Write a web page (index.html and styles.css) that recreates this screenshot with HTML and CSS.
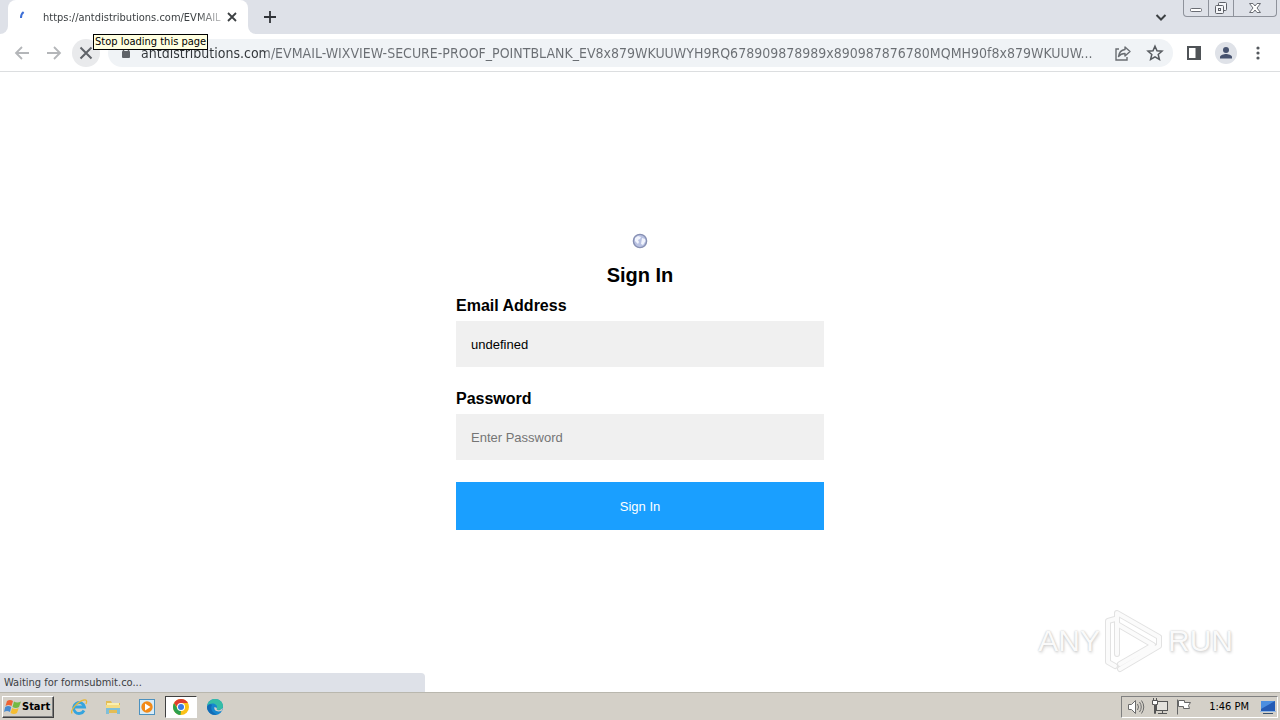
FILE: index.html
```html
<!DOCTYPE html>
<html lang="en">
<head>
<meta charset="utf-8">
<meta name="viewport" content="width=device-width, initial-scale=1">
<title>Sign In</title>
<link rel="stylesheet" href="styles.css">
</head>
<body>
<header class="tabstrip">
  <div class="tab-edge"></div>
  <div class="tab">
    <svg class="spinner" width="16" height="16" viewBox="0 0 16 16" fill="none" stroke="#3d6fd6" stroke-width="2"><path d="M2 9Q1.800 5.200 4.600 3"/></svg>
    <span class="tab-title">https://antdistributions.com/EVMAIL</span>
    <button class="bare" aria-label="Close tab"><svg width="16" height="16" viewBox="0 0 16 16" stroke="#3c4043" stroke-width="1.800"><path d="M4 4l8 8M12 4l-8 8"/></svg></button>
  </div>
  <div class="strip-rest">
    <button class="bare new-tab" aria-label="New tab"><svg width="16" height="16" viewBox="0 0 16 16" stroke="#303338" stroke-width="1.800"><path d="M8 2v12M2 8h12"/></svg></button>
    <button class="bare tab-search" aria-label="Search tabs"><svg width="16" height="16" viewBox="0 0 16 16" fill="none" stroke="#3c4043" stroke-width="2"><path d="M3.500 6L8 10.500 12.500 6"/></svg></button>
    <div class="window-buttons">
      <button class="win" aria-label="Minimize"><svg width="16" height="16" viewBox="0 0 16 16" fill="#fff" stroke="#6a6d74"><rect x="2.500" y="8.500" width="11" height="3" rx="1"/></svg></button>
      <button class="win" aria-label="Restore"><svg width="16" height="16" viewBox="0 0 16 16" fill="#f4f5f8" stroke="#5d6067"><rect x="5.500" y="2.500" width="8" height="8" rx="1"/><rect x="2.500" y="5.500" width="8" height="8" rx="1"/><rect x="5.500" y="8.500" width="2" height="2"/></svg></button>
      <button class="win win-close" aria-label="Close"><svg width="16" height="16" viewBox="0 0 16 16" fill="#fff" stroke="#6a6d74"><path d="M2.500 3.500h3.500l2 2.500 2-2.500h3.500l-3.500 4.500 3.500 4.500H10L8 10l-2 2.500H2.500L6 8z"/></svg></button>
    </div>
  </div>
</header>

<nav class="toolbar">
  <button class="bare round" aria-label="Back"><svg width="18" height="18" viewBox="0 0 18 18" fill="none" stroke="#b4b6b9" stroke-width="1.800"><path d="M16 9H3M9 3L3 9l6 6"/></svg></button>
  <button class="bare round" aria-label="Forward"><svg width="18" height="18" viewBox="0 0 18 18" fill="none" stroke="#b4b6b9" stroke-width="1.800"><path d="M2 9h13M9 3l6 6-6 6"/></svg></button>
  <div class="stop-wrap">
    <button class="bare round stop" aria-label="Stop" aria-describedby="tip"><svg width="18" height="18" viewBox="0 0 18 18" stroke="#5f6368" stroke-width="2"><path d="M3.500 3.500l11 11M14.500 3.500l-11 11"/></svg></button>
    <div class="tooltip" id="tip" role="tooltip">Stop loading this page</div>
  </div>
  <div class="omnibox">
    <svg class="lock" width="12" height="16" viewBox="0 0 12 16"><path d="M3.500 7V5a2.500 2.500 0 0 1 5 0v2" fill="none" stroke="#5f6368" stroke-width="1.500"/><rect x="2" y="6" width="8" height="7" rx="1" fill="#5f6368"/></svg>
    <input class="url" type="text" aria-label="Address" spellcheck="false" value="antdistributions.com/EVMAIL-WIXVIEW-SECURE-PROOF_POINTBLANK_EV8x879WKUUWYH9RQ678909878989x890987876780MQMH90f8x879WKUUW...">
    <button class="bare" aria-label="Share"><svg width="18" height="18" viewBox="0 0 18 18" fill="none" stroke="#696d72" stroke-width="1.400"><path d="M5 5H2v11h11v-3"/><path d="M11 3l5 4.500-5 4.500V9.500C8 9.500 6 10.500 4.500 12.500 5 8.500 7.500 6 11 5.500z" stroke-linejoin="round"/></svg></button>
    <button class="bare" aria-label="Bookmark"><svg width="18" height="18" viewBox="0 0 18 18" fill="none" stroke="#55595e" stroke-width="1.500"><path d="M9 2.200l2 4.600 5 .4-3.800 3.300 1.200 4.900L9 12.800l-4.400 2.600 1.200-4.900L2 7.200l5-.4z"/></svg></button>
  </div>
  <button class="bare" aria-label="Side panel"><svg width="16" height="16" viewBox="0 0 16 16"><rect x="2" y="2" width="12" height="12" fill="#fff" stroke="#4f5357" stroke-width="2"/><path d="M9.500 2H14v12H9.500z" fill="#4f5357"/></svg></button>
  <button class="bare avatar" aria-label="Profile"><svg width="22" height="22" viewBox="0 0 22 22"><circle cx="11" cy="11" r="11" fill="#dfe2e8"/><circle cx="11" cy="8" r="3" fill="#47536f"/><path d="M5 16.500v-1.500c0-2 4-3 6-3s6 1 6 3v1.500z" fill="#47536f"/></svg></button>
  <button class="bare" aria-label="Menu"><svg width="16" height="16" viewBox="0 0 16 16" fill="#55595e"><circle cx="8" cy="3" r="1.600"/><circle cx="8" cy="8" r="1.600"/><circle cx="8" cy="13" r="1.600"/></svg></button>
</nav>

<main class="page">
  <form class="signin">
    <svg class="globe" width="16" height="16" viewBox="0 0 16 16"><circle cx="8" cy="8" r="6.600" fill="#b9c2e2" stroke="#8790b3" stroke-width="1.400"/><path d="M3 5l3-2 3 1-1 2-2 1 1 2-1 2-3-3zM10 5l3 1 .5 2-2.500 4-2-1 .5-3z" fill="#f1f4fd"/></svg>
    <h1>Sign In</h1>
    <label for="email">Email Address</label>
    <input id="email" class="field" type="text" value="undefined">
    <label for="password">Password</label>
    <input id="password" class="field" type="password" placeholder="Enter Password">
    <button class="submit" type="button">Sign In</button>
  </form>
  <div class="status">Waiting for formsubmit.co...</div>
  <div class="watermark">
    <span>ANY</span>
    <svg width="60" height="66" viewBox="0 0 60 66" fill="none" stroke-linejoin="round" stroke-linecap="round"><g stroke="#e2e2e2" stroke-width="6"><path d="M11 11L4 13v41l7 4M13 46V5l42 24"/><path d="M13 16l36 21-33 19M16 61l39-23V30"/></g><g stroke="#fbfbfb" stroke-width="4"><path d="M11 11L4 13v41l7 4M13 46V5l42 24"/><path d="M13 16l36 21-33 19M16 61l39-23V30"/></g></svg>
    <span>RUN</span>
  </div>
</main>

<footer class="taskbar">
  <button class="start"><svg width="18" height="16" viewBox="0 0 18 16"><path d="M3 2q3-2 6 0L7.500 7q-3-2-6 0z" fill="#ee6334"/><path d="M10 2.500q3 2 7 0L15 8q-3 2-6.500 0z" fill="#74b943"/><path d="M1.200 8q3-2 6 0L6 13q-3-2-6 0z" fill="#488bd0"/><path d="M8.200 9q3 2 6.500 0L13 14q-3 2-6.500 0z" fill="#f5bd32"/></svg>Start</button>
  <div class="launchers">
    <button class="bare task" aria-label="Internet Explorer"><svg width="18" height="18" viewBox="0 0 18 18" fill="none"><path d="M14 12.500A5.500 5.500 0 1 1 14.500 9H5" stroke="#35a4de" stroke-width="2.800"/><path d="M2 15.500C0 12 8 3 14 2c3-.5 3 1.500 2 4" stroke="#e7b839" stroke-width="1.300"/></svg></button>
    <button class="bare task" aria-label="File Explorer"><svg width="18" height="18" viewBox="0 0 18 18"><path d="M2 3h5l1 2h8v10H2z" fill="#e3bd55"/><path d="M3 5h12v6H3z" fill="#fbefad"/><path d="M2 8h14v8h-3v-4H5v4H2z" fill="#7fbfd9"/><path d="M2 7h14v3H2z" fill="#f5dc83"/></svg></button>
    <button class="bare task" aria-label="Media Player"><svg width="18" height="18" viewBox="0 0 18 18"><rect x="1.500" y="1.500" width="15" height="15" fill="#d8ecf8" stroke="#4c91bf"/><circle cx="9" cy="9" r="5.700" fill="#f28a18"/><path d="M7 5.500l5.500 3.500L7 12.500z" fill="#fff"/></svg></button>
    <button class="bare task active" aria-label="Chrome"><svg width="18" height="18" viewBox="0 0 18 18"><circle cx="9" cy="9" r="8" fill="#fbc116"/><path d="M2.070 5L6 11.500l3 1L8.500 17A8 8 0 0 1 2.070 5z" fill="#2da04e"/><path d="M9 5h6.930A8 8 0 0 0 2.070 5L6 10z" fill="#df3d30"/><circle cx="9" cy="9" r="4" fill="#fff"/><circle cx="9" cy="9" r="3" fill="#397be6"/></svg></button>
    <button class="bare task" aria-label="Edge"><svg width="18" height="18" viewBox="0 0 18 18"><circle cx="9" cy="9" r="8" fill="#1686cf"/><path d="M1.200 8C2 3 5.500 1 9 1c5 0 8 3.500 8 7 0 2.500-2 4-5 4-2 0-2-1-1-2 .5-3-2-4.500-4.500-4.500S2 6.500 1.200 8z" fill="#35bda6"/><path d="M6 7c-2 3 0 8 5 9.500-5 1.500-10-2.500-10-7.500C2 6 5 5.500 6 7z" fill="#136bb5"/><path d="M8.500 9c-1 3 2 5.500 7 4l1.500-3-3 2c-3 1-4-1-3-2z" fill="#d4d0c8"/></svg></button>
  </div>
  <div class="tray">
    <svg width="18" height="18" viewBox="0 0 18 18" fill="#fff" stroke="#6b6b6b"><path d="M1.500 6.500h3l4-4v13l-4-4h-3z"/><path d="M10.500 6q2 3 0 6M12.500 4q3.500 5 0 10M14.500 2.500q4.500 6.500 0 13" fill="none"/></svg>
    <svg width="18" height="18" viewBox="0 0 18 18" fill="#e4e2dd" stroke="#555"><rect x="5.500" y="3.500" width="11" height="9"/><path d="M7 15.500h9M11.500 13v3"/><path d="M1.500 2.500h5v4h-2v9h-1v-9h-2zM2.500 0v3M5.500 0v3" fill="#fff"/></svg>
    <svg width="18" height="18" viewBox="0 0 18 18" fill="#fff" stroke="#666"><path d="M2.500 1.500v15M3.500 2.500h6v2h6l-2 3 1 3h-6v-2h-5z"/></svg>
    <time class="clock">1:46 PM</time>
    <svg width="16" height="16" viewBox="0 0 16 16"><path d="M1 2h14v10H1z" fill="#245bb5"/><path d="M1 2h14L1 10z" fill="#4b8ee0"/><path d="M0 12h16v1H0z" fill="#91b8e6"/><path d="M3 14h10v1H3z" fill="#37506d"/></svg>
  </div>
</footer>
</body>
</html>
```
FILE: styles.css
```css
* { box-sizing: border-box; }
body {
  margin: 0;
  min-height: 100vh;
  display: flex;
  flex-direction: column;
  background: #fff;
  font-family: "DejaVu Sans Condensed", "DejaVu Sans", sans-serif;
  font-size: 11px;
  color: #202124;
}
button, input { font: inherit; color: inherit; }
svg { display: block; flex: none; }
.bare {
  display: flex;
  align-items: center;
  justify-content: center;
  padding: 0;
  border: 0;
  background: none;
}

.tabstrip { display: flex; height: 34px; background: #fff; }
.tab-edge { width: 8px; background: #dee1e8; border-bottom-right-radius: 8px; }
.tab {
  display: flex;
  align-items: center;
  width: 240px;
  padding: 0 8px 0 11px;
  background: linear-gradient(#dee1e8, #dee1e8) top / 100% 8px no-repeat;
  position: relative;
  z-index: 0;
}
.tab::before {
  content: "";
  position: absolute;
  inset: 0;
  z-index: -1;
  background: #fff;
  border-radius: 8px 8px 0 0;
}
.tab-title {
  flex: 1;
  margin-left: 8px;
  white-space: nowrap;
  color: #3c4043;
  mask-image: linear-gradient(to right, #000 85%, rgba(0, 0, 0, 0.2));
}
.strip-rest {
  flex: 1;
  display: flex;
  align-items: center;
  padding: 0 3px 0 14px;
  background: #dee1e8;
  border-bottom-left-radius: 8px;
}
.tab-search { margin-left: auto; margin-right: 14px; }
.window-buttons {
  display: flex;
  align-self: flex-start;
  height: 17px;
  border: 1px solid #8e929b;
  border-top: 0;
  border-radius: 0 0 4px 4px;
}
.win {
  display: flex;
  align-items: center;
  justify-content: center;
  width: 25px;
  padding: 0;
  border: 0;
  border-right: 1px solid #8e929b;
  background: none;
}
.win-close { width: 42px; border-right: 0; }

.toolbar {
  display: flex;
  align-items: center;
  gap: 13px;
  height: 38px;
  padding: 0 14px 0 8px;
  border-bottom: 1px solid #dcdee0;
}
.round { width: 28px; height: 28px; border-radius: 50%; }
.round + .round, .stop-wrap { margin-left: -9px; }
.stop-wrap { position: relative; }
.stop { background: #e9eaec; }
.tooltip {
  position: absolute;
  left: 21px;
  top: -5px;
  z-index: 2;
  padding: 0 1px;
  border: 1px solid #000;
  background: #ffffe1;
  color: #000;
  line-height: 14px;
  white-space: nowrap;
}
.omnibox {
  flex: 1;
  display: flex;
  align-items: center;
  gap: 14px;
  min-width: 0;
  height: 28px;
  margin-left: -5px;
  padding: 0 9px 0 12px;
  border-radius: 14px;
  background: #f0f3f6;
}
.lock { margin-right: -5px; }
.url {
  flex: 1;
  min-width: 0;
  padding: 0;
  border: 0;
  outline: 0;
  font-size: 14px;
  background: linear-gradient(to right, #303438 125px, #6a6e73 125px);
  background-clip: text;
  -webkit-background-clip: text;
  -webkit-text-fill-color: transparent;
}

.page {
  flex: 1;
  position: relative;
  padding: 161px 16px 32px;
  font-family: "Liberation Sans", Arial, sans-serif;
  color: #000;
}
.signin {
  display: flex;
  flex-direction: column;
  width: 100%;
  max-width: 368px;
  margin: 0 auto;
}
.globe { align-self: center; }
.signin h1 {
  margin: 14px 0 9px;
  font-size: 20px;
  line-height: 24px;
  text-align: center;
}
.signin label { font-size: 16px; font-weight: 700; line-height: 20px; margin-bottom: 5px; }
.field {
  width: 100%;
  height: 46px;
  margin-bottom: 22px;
  padding: 0 15px;
  border: 0;
  background: #f0f0f0;
  font-size: 13px;
}
.field::placeholder { color: #757575; opacity: 1; }
.submit {
  height: 48px;
  border: 0;
  background: #1a9fff;
  color: #fff;
  font-size: 13px;
}
.status {
  position: absolute;
  left: 0;
  bottom: 0;
  width: 425px;
  padding: 1px 4px 0;
  border-top-right-radius: 4px;
  background: #dee1e8;
  color: #3c4043;
  font: 11px/18px "DejaVu Sans Condensed", "DejaVu Sans", sans-serif;
}
.watermark {
  position: absolute;
  right: 47px;
  bottom: 18px;
  display: flex;
  align-items: center;
  gap: 4px;
  color: #fafafa;
  font: 30px "Liberation Sans", Arial, sans-serif;
  text-shadow: 0 0 2px #bbb, 1px 2px 3px #ddd;
}

.taskbar {
  display: flex;
  align-items: center;
  gap: 9px;
  height: 28px;
  padding: 2px;
  border-top: 1px solid #b9b7ae;
  background: #d4d0c8;
  color: #000;
}
.start {
  display: flex;
  align-items: center;
  height: 22px;
  padding: 0 3px 0 1px;
  border: 1px solid;
  border-color: #fff #404040 #404040 #fff;
  box-shadow: inset -1px -1px #808080;
  background: #d4d0c8;
  font-weight: 700;
}
.launchers { display: flex; gap: 2px; }
.task { width: 32px; height: 22px; }
.active { border: 1px solid; border-color: #404040 #fff #fff #404040; background: #fff; }
.tray {
  display: flex;
  align-items: center;
  gap: 6px;
  height: 22px;
  margin-left: auto;
  padding: 0 1px 0 5px;
  border: 1px solid;
  border-color: #808080 #fff #fff #808080;
}
.clock { margin: 0 5px 0 10px; }
```
